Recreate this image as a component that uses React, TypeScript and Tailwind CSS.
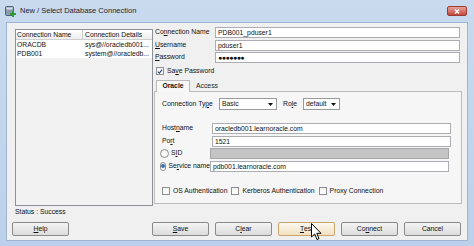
import React from 'react';

const Field: React.FC<{ w: string; children?: React.ReactNode; disabled?: boolean }> = ({ w, children, disabled }) => (
  <div
    className={`${w} h-[11px] border ${disabled ? 'bg-[#c4c4c4] border-[#a8a8a8]' : 'bg-white border-[#abadb3]'} pl-[2px] text-[6.8px] leading-[9px] text-[#111] overflow-hidden whitespace-nowrap`}
  >
    {children}
  </div>
);

const Check: React.FC<{ checked?: boolean }> = ({ checked }) => (
  <div className="w-[8px] h-[8px] border border-[#8f8f8f] bg-gradient-to-b from-[#f4f4f4] to-white flex items-center justify-center">
    {checked && (
      <svg width="7" height="7" viewBox="0 0 7 7">
        <path d="M1 3.6 L2.8 5.4 L6 1.4" fill="none" stroke="#24468a" strokeWidth="1.3" />
      </svg>
    )}
  </div>
);

const Radio: React.FC<{ checked?: boolean }> = ({ checked }) => (
  <div className="w-[9px] h-[9px] rounded-full border border-[#8f8f8f] bg-gradient-to-b from-[#f2f2f2] to-white flex items-center justify-center">
    {checked && <div className="w-[4px] h-[4px] rounded-full bg-[#3b6fb6]" />}
  </div>
);

const Combo: React.FC<{ w: string; value: string }> = ({ w, value }) => (
  <div className={`${w} h-[12px] border border-[#9a9a9a] bg-white flex items-center pl-[2px] pr-[3px] text-[6.8px] text-[#111]`}>
    <span>{value}</span>
    <svg className="ml-auto" width="5" height="3" viewBox="0 0 5 3">
      <path d="M0 0 L5 0 L2.5 3 Z" fill="#111" />
    </svg>
  </div>
);

const Btn: React.FC<{ children: React.ReactNode; hot?: boolean }> = ({ children, hot }) => (
  <div
    className={`w-[57px] h-[14px] rounded-[2px] border flex items-center justify-center text-[6.8px] text-[#111] ${
      hot
        ? 'border-[#c9a46b] bg-gradient-to-b from-[#fdf8ee] to-[#f1e1c2]'
        : 'border-[#8a8a8a] bg-gradient-to-b from-[#f4f4f4] to-[#dcdcdc]'
    }`}
  >
    {children}
  </div>
);

export default function App() {
  return (
    <div className="w-[474px] h-[246px] relative overflow-hidden flex flex-col bg-gradient-to-b from-[#c9daee] to-[#bcd1ea] font-['Liberation_Sans',Arial,sans-serif]">
      {/* title bar */}
      <div className="h-[22px] flex items-center pl-[5px] pr-[7px]">
        <svg width="11" height="11" viewBox="0 0 11 11">
          <rect x="0.5" y="0.5" width="8" height="9" rx="1" fill="#8a9bb0" stroke="#4e6077" />
          <rect x="1.5" y="1.5" width="6" height="2" fill="#d6e0ea" />
          <path d="M8 5 V11 M5 8 H11" stroke="#2f9a2f" strokeWidth="2" />
        </svg>
        <span className="ml-[4px] text-[7.5px] text-[#1b2636]">New / Select Database Connection</span>
        <div className="ml-auto w-[20px] h-[10px] rounded-[2px] border border-[#9b3b33] bg-gradient-to-b from-[#e6a39b] to-[#c4473c] flex items-center justify-center">
          <svg width="6" height="5" viewBox="0 0 6 5">
            <path d="M1 0.5 L5 4.5 M5 0.5 L1 4.5" stroke="white" strokeWidth="1.4" />
          </svg>
        </div>
      </div>

      {/* client area */}
      <div className="mx-[6px] h-[219px] bg-[#f0f0f0] border border-[#9fb6d2] flex flex-col text-[6.8px] text-[#111]">
        <div className="flex pt-[4px] pl-[8px]">
          {/* connection list */}
          <div className="mt-[2px] w-[138px] h-[177px] border border-[#8d9197] bg-[#f2f2f2] flex flex-col">
            <div className="flex h-[10px] border-b border-[#d0d0d0] bg-gradient-to-b from-white to-[#eeeeee]">
              <div className="w-[67px] pl-[1px] leading-[10px] border-r border-[#d0d0d0]">Connection Name</div>
              <div className="flex-1 pl-[2px] leading-[10px]">Connection Details</div>
            </div>
            <div className="flex h-[9px] bg-white">
              <div className="w-[67px] pl-[1px] leading-[9px]">ORACDB</div>
              <div className="flex-1 pl-[2px] leading-[9px] whitespace-nowrap">sys@//oracledb001...</div>
            </div>
            <div className="flex h-[9px] bg-white">
              <div className="w-[67px] pl-[1px] leading-[9px]">PDB001</div>
              <div className="flex-1 pl-[2px] leading-[9px] whitespace-nowrap">system@//oracledb...</div>
            </div>
          </div>

          {/* right panel */}
          <div className="ml-[1px] w-[308px] flex flex-col">
            <div className="flex flex-col gap-[1.5px]">
              <div className="flex items-center">
                <span className="w-[61px] pl-[1px]">Co<u>n</u>nection Name</span>
                <Field w="w-[245px]">PDB001_pduser1</Field>
              </div>
              <div className="flex items-center">
                <span className="w-[61px] pl-[1px]"><u>U</u>sername</span>
                <Field w="w-[245px]">pduser1</Field>
              </div>
              <div className="flex items-center">
                <span className="w-[61px] pl-[1px]"><u>P</u>assword</span>
                <Field w="w-[245px]"><span className="text-[7px] tracking-[-0.5px]">●●●●●●●</span></Field>
              </div>
            </div>
            <div className="mt-[3px] h-[10px] flex items-center pl-[2px] gap-[3px]">
              <Check checked />
              <span>Sa<u>v</u>e Password</span>
            </div>

            {/* tabs */}
            <div className="mt-[3px] h-[12px] flex items-end pl-[2px]">
              <div className="relative z-10 -mb-[1px] h-[12px] w-[34px] border border-b-0 border-[#b9b9b9] bg-[#f8f8f8] flex items-center justify-center font-bold">
                Oracle
              </div>
              <div className="h-[10px] w-[34px] flex items-center justify-center text-[#222]">Access</div>
            </div>
            <div className="h-[113px] border border-[#bcbcbc] bg-[#f6f6f6] pl-[7px] pt-[6px] flex flex-col">
              <div className="flex items-center">
                <span className="w-[57px]">Connection Ty<u>p</u>e</span>
                <Combo w="w-[58px]" value="Basic" />
                <span className="ml-[6px] w-[20px]">Ro<u>l</u>e</span>
                <Combo w="w-[37px]" value="default" />
              </div>
              <div className="mt-[13px] flex flex-col gap-[1.5px]">
                <div className="flex items-center">
                  <span className="w-[50px]">Host<u>n</u>ame</span>
                  <Field w="w-[239px]">oracledb001.learnoracle.com</Field>
                </div>
                <div className="flex items-center">
                  <span className="w-[50px]">Po<u>r</u>t</span>
                  <Field w="w-[239px]">1521</Field>
                </div>
                <div className="flex items-center">
                  <div className="w-[50px] flex items-center gap-[2px] -ml-[2px]">
                    <Radio />
                    <span>S<u>I</u>D</span>
                  </div>
                  <Field w="w-[239px]" disabled />
                </div>
                <div className="flex items-center">
                  <div className="w-[50px] flex items-center gap-[2px] -ml-[2px] whitespace-nowrap">
                    <Radio checked />
                    <span>Se<u>r</u>vice name</span>
                  </div>
                  <Field w="w-[239px]">pdb001.learnoracle.com</Field>
                </div>
              </div>
              <div className="mt-[14px] flex items-center">
                <Check />
                <span className="ml-[3px]">OS Authentication</span>
                <div className="ml-[4px]"><Check /></div>
                <span className="ml-[3px]">Kerberos Authentication</span>
                <div className="ml-[4px]"><Check /></div>
                <span className="ml-[3px]">Proxy Connection</span>
              </div>
            </div>
          </div>
        </div>

        <div className="mt-[2px] pl-[8px] h-[8px] leading-[8px]">Status : Success</div>

        <div className="mt-[6px] flex pl-[5px] gap-[6px]">
          <Btn><u>H</u>elp</Btn>
          <div className="ml-[77px] flex gap-[6px]">
            <Btn><u>S</u>ave</Btn>
            <Btn>C<u>l</u>ear</Btn>
            <Btn hot><u>T</u>est</Btn>
            <Btn>Co<u>n</u>nect</Btn>
            <Btn>Cancel</Btn>
          </div>
        </div>
      </div>

      {/* mouse pointer over Test */}
      <svg className="absolute left-[311px] top-[223px]" width="11" height="18" viewBox="0 0 11 18">
        <path d="M0.5 0.5 L0.5 14 L3.7 11 L6 16.5 L8 15.6 L5.8 10.3 L10 10.3 Z" fill="white" stroke="black" strokeWidth="1" />
      </svg>
    </div>
  );
}
